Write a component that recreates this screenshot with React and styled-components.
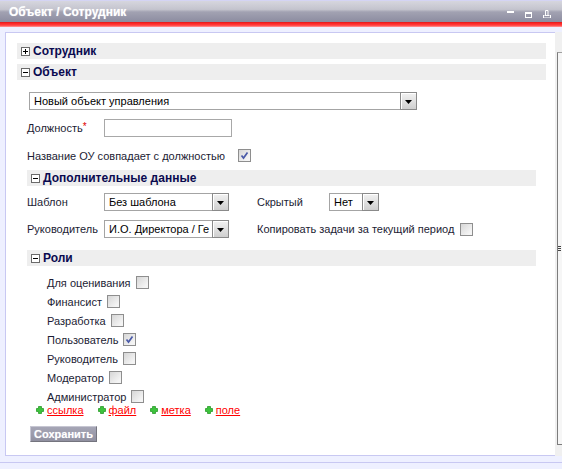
import React from 'react';
import styled, { createGlobalStyle } from 'styled-components';

const Global = createGlobalStyle`
  html, body { margin: 0; padding: 0; background: #fff; }
  body { font-family: "Liberation Sans", Arial, sans-serif; }
  * { box-sizing: border-box; }
`;

const Window = styled.div`
  width: 562px;
  height: 469px;
  overflow: hidden;
  display: flex;
  flex-direction: column;
  background: #eef0ff;
`;

const TitleBar = styled.div`
  height: 22px;
  flex: none;
  display: flex;
  align-items: center;
  justify-content: space-between;
  padding: 0 11px 0 9px;
  border-top: 1px solid #d4d4f4;
  background: linear-gradient(to bottom, #d6d6de 0%, #c4c4ce 40%, #a2a2b2 52%, #8c8ca0 100%);
`;

const Title = styled.div`
  color: #fff;
  font-weight: bold;
  font-size: 12px;
  text-shadow: 0 0 1px rgba(255, 255, 255, 0.6);
`;

const Tools = styled.div`
  display: flex;
  align-items: center;
  gap: 10px;
`;

const RedStripe = styled.div`
  height: 5px;
  flex: none;
  background: linear-gradient(to bottom, #e01818 0%, #ff2a2a 35%, #ff4040 65%, #ff9c9c 100%);
`;

const BodyArea = styled.div`
  display: flex;
  padding: 5px 0 0 5px;
  flex: none;
`;

const Panel = styled.div`
  width: 550px;
  height: 424px;
  background: #fff;
  border: 1px solid #c8c8f2;
  border-right: none;
  padding: 10px 9px 0 11px;
  display: flex;
  flex-direction: column;
`;

const SideStrip = styled.div`
  width: 7px;
  height: 424px;
  background: #f0f0f0;
  padding-top: 20px;
`;

const SideBox = styled.div`
  margin-left: 2px;
  height: 393px;
  border-left: 1px solid #7c7c7c;
  border-top: 1px solid #a0a0a0;
  border-bottom: 1px solid #7c7c7c;
  background: #f6f6f6;
  display: flex;
  flex-direction: column;
  justify-content: center;
`;

const Footer = styled.div`
  flex: 1;
  margin-top: 6px;
  border-top: 1px solid #c8c8f2;
`;

const SectionBar = styled.div`
  height: 16px;
  flex: none;
  display: flex;
  align-items: center;
  gap: 3px;
  padding-left: 4px;
  background: #eeeeee;
  margin: ${p => p.$margin || '0'};
  color: #0a0a50;
  font-weight: bold;
  font-size: 12px;
`;

const SectionBody = styled.div`
  display: flex;
  flex-direction: column;
  padding: 0 10px;
`;

const SelectBox = styled.div`
  width: ${p => p.$w}px;
  height: 18px;
  border: 1px solid #a4a4a4;
  background: #fff;
  display: flex;
  margin: ${p => p.$margin || '0'};
`;

const SelectText = styled.div`
  flex: 1;
  min-width: 0;
  overflow: hidden;
  white-space: nowrap;
  padding-left: 4px;
  font-size: 11px;
  line-height: 16px;
  color: #000;
`;

const SelectBtn = styled.div`
  width: 17px;
  flex: none;
  border: 1px solid #8a8a8a;
  margin: -1px -1px -1px 0;
  box-shadow: inset 1px 1px 0 #fff;
  background: linear-gradient(to bottom, #f2f2f2, #cfcfcf);
  display: flex;
  align-items: center;
  justify-content: center;
  padding-top: 2px;
`;

const FieldRow = styled.div`
  display: flex;
  align-items: center;
  margin-top: ${p => p.$mt}px;
`;

const Label = styled.span`
  font-size: 11px;
  color: #1c1c34;
  white-space: nowrap;
  width: ${p => (p.$w ? `${p.$w}px` : 'auto')};
  flex: none;
`;

const Required = styled.span`
  color: #e00000;
  font-size: 10px;
  vertical-align: top;
  position: relative;
  top: -1px;
`;

const TextInput = styled.div`
  width: 128px;
  height: 18px;
  border: 1px solid #a8a8a8;
  background: #fff;
`;

const CheckRow = styled.div`
  display: flex;
  align-items: center;
  gap: ${p => p.$gap}px;
  height: ${p => p.$h || 13}px;
  margin-top: ${p => p.$mt || 0}px;
`;

const CheckBox = styled.span`
  width: 13px;
  height: 13px;
  flex: none;
  border: 1px solid #8e8e8e;
  background: linear-gradient(135deg, #d6d6d6 0%, #f4f4f4 80%);
  display: inline-flex;
  align-items: center;
  justify-content: center;
`;

const ExtraGrid = styled.div`
  display: grid;
  grid-template-columns: 77px 153px 72px 1fr;
  grid-auto-rows: 18px;
  row-gap: 9px;
  align-items: center;
  margin-top: 7px;
`;

const SpanCell = styled.div`
  grid-column: 3 / span 2;
  display: flex;
  align-items: center;
  gap: 6px;
`;

const RolesList = styled.div`
  display: flex;
  flex-direction: column;
  margin-top: 7px;
  padding-left: 20px;
`;

const LinksRow = styled.div`
  display: flex;
  align-items: center;
  gap: 14px;
  height: 12px;
  margin-top: -2px;
  padding-left: 9px;
`;

const LinkItem = styled.span`
  display: inline-flex;
  align-items: center;
  gap: 3px;
`;

const Link = styled.a`
  color: #ff0000;
  font-size: 11px;
  text-decoration: underline;
  cursor: pointer;
`;

const SaveButton = styled.button`
  width: 67px;
  height: 16px;
  padding: 0;
  margin: 10px 0 0 3px;
  border: 1px solid;
  border-color: #c6c6d2 #74747e #74747e #c6c6d2;
  background: linear-gradient(to bottom, #a6a6b6, #9090a0);
  color: #fff;
  font-family: "Liberation Sans", Arial, sans-serif;
  font-weight: bold;
  font-size: 11px;
  line-height: 14px;
  text-shadow: 0 0 1px rgba(220, 220, 230, 0.7);
  align-self: flex-start;
`;

const Toggle = ({ open }) => (
  <svg width="9" height="9" viewBox="0 0 9 9">
    <rect x="0.5" y="0.5" width="8" height="8" fill="#fff" stroke="#6a6a6a" />
    <rect x="2" y="4" width="5" height="1" fill="#000" />
    {!open && <rect x="4" y="2" width="1" height="5" fill="#000" />}
  </svg>
);

const Arrow = () => (
  <svg width="7" height="5" viewBox="0 0 7 5">
    <path d="M0 0 H7 L3.5 4 Z" fill="#000" />
  </svg>
);

const Select = ({ w, text, margin }) => (
  <SelectBox $w={w} $margin={margin}>
    <SelectText>{text}</SelectText>
    <SelectBtn>
      <Arrow />
    </SelectBtn>
  </SelectBox>
);

const Check = ({ checked }) => (
  <CheckBox>
    {checked && (
      <svg width="9" height="9" viewBox="0 0 9 9">
        <path d="M1.5 4.5 L3.5 7 L7.5 1.5" fill="none" stroke="#4a5aa8" strokeWidth="1.7" />
      </svg>
    )}
  </CheckBox>
);

const GreenPlus = () => (
  <svg width="8" height="8" viewBox="0 0 8 8">
    <path
      d="M2.5 0.5 H5.5 V2.5 H7.5 V5.5 H5.5 V7.5 H2.5 V5.5 H0.5 V2.5 H2.5 Z"
      fill="#3cc43c"
      stroke="#2a9a2a"
      strokeWidth="0.8"
    />
  </svg>
);

const MinIcon = () => (
  <svg width="8" height="12" viewBox="0 0 8 12">
    <rect x="0" y="5" width="7" height="2" fill="#fff" />
  </svg>
);
const MaxIcon = () => (
  <svg width="8" height="12" viewBox="0 0 8 12">
    <rect x="0.5" y="6.5" width="6" height="5" fill="none" stroke="#fff" />
    <rect x="0" y="6" width="7" height="2" fill="#fff" />
  </svg>
);
const PrintIcon = () => (
  <svg width="8" height="12" viewBox="0 0 8 12">
    <path d="M2.5 9 V4.5 H5 V9" fill="none" stroke="#fff" />
    <path d="M0.5 9 V12 H7.5 V9" fill="none" stroke="#fff" />
    <path d="M1.5 9.5 H6.5" stroke="#fff" />
  </svg>
);

const Grip = () => (
  <svg width="4" height="6" viewBox="0 0 4 6">
    <rect x="0" y="0" width="3" height="1" fill="#444" />
    <rect x="0" y="2" width="3" height="1" fill="#444" />
    <rect x="0" y="4" width="3" height="1" fill="#444" />
  </svg>
);

const roles = [
  ['Для оценивания', false],
  ['Финансист', false],
  ['Разработка', false],
  ['Пользователь', true],
  ['Руководитель', false],
  ['Модератор', false],
  ['Администратор', false],
];

const links = ['ссылка', 'файл', 'метка', 'поле'];

export default function App() {
  return (
    <>
      <Global />
      <Window>
        <TitleBar>
          <Title>Объект / Сотрудник</Title>
          <Tools>
            <MinIcon />
            <MaxIcon />
            <PrintIcon />
          </Tools>
        </TitleBar>
        <RedStripe />
        <BodyArea>
          <Panel>
            <SectionBar $margin="0 0 5px 0">
              <Toggle open={false} />
              <span>Сотрудник</span>
            </SectionBar>
            <SectionBar>
              <Toggle open />
              <span>Объект</span>
            </SectionBar>
            <SectionBody>
              <Select w={388} text="Новый объект управления" margin="12px 0 0 2px" />
              <FieldRow $mt={9}>
                <Label $w={77}>
                  Должность<Required>*</Required>
                </Label>
                <TextInput />
              </FieldRow>
              <CheckRow $gap={13} $mt={12}>
                <Label>Название ОУ совпадает с должностью</Label>
                <Check checked />
              </CheckRow>
              <SectionBar $margin="8px 0 0 0">
                <Toggle open />
                <span>Дополнительные данные</span>
              </SectionBar>
              <ExtraGrid>
                <Label>Шаблон</Label>
                <Select w={125} text="Без шаблона" />
                <Label>Скрытый</Label>
                <Select w={50} text="Нет" />
                <Label>Руководитель</Label>
                <Select w={125} text="И.О. Директора / Ге" />
                <SpanCell>
                  <Label>Копировать задачи за текущий период</Label>
                  <Check />
                </SpanCell>
              </ExtraGrid>
              <SectionBar $margin="12px 0 0 0">
                <Toggle open />
                <span>Роли</span>
              </SectionBar>
              <RolesList>
                {roles.map(([name, checked]) => (
                  <CheckRow key={name} $gap={5} $h={19}>
                    <Label>{name}</Label>
                    <Check checked={checked} />
                  </CheckRow>
                ))}
              </RolesList>
              <LinksRow>
                {links.map(l => (
                  <LinkItem key={l}>
                    <GreenPlus />
                    <Link>{l}</Link>
                  </LinkItem>
                ))}
              </LinksRow>
              <SaveButton>Сохранить</SaveButton>
            </SectionBody>
          </Panel>
          <SideStrip>
            <SideBox>
              <Grip />
            </SideBox>
          </SideStrip>
        </BodyArea>
        <Footer />
      </Window>
    </>
  );
}
